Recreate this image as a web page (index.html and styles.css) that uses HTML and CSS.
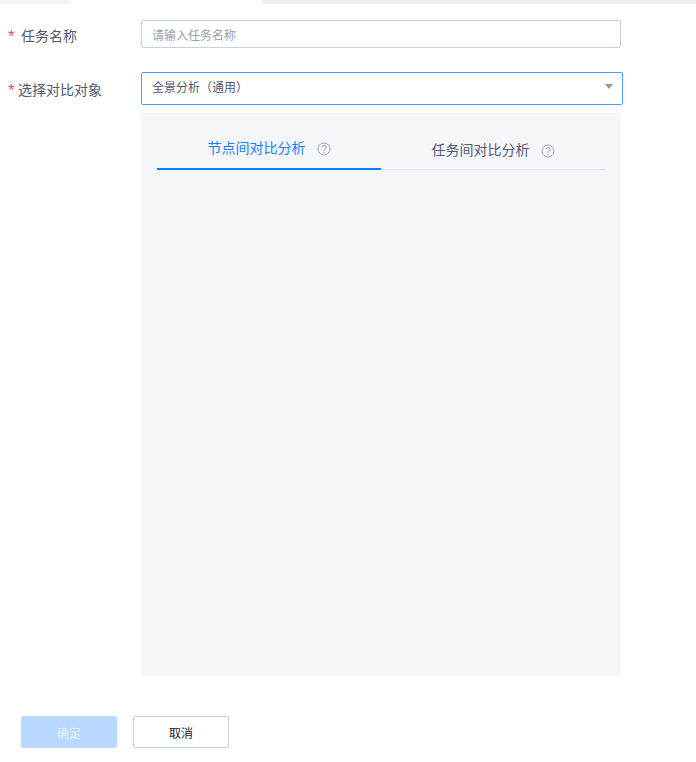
FILE: index.html
```html
<!DOCTYPE html>
<html lang="zh-CN">
<head>
<meta charset="utf-8">
<title>对比分析</title>
<link rel="stylesheet" href="styles.css">
</head>
<body>
<div class="strip">
  <div class="strip-side strip-left"></div>
  <div class="strip-active"></div>
  <div class="strip-side strip-right"></div>
</div>
<form class="form">
  <div class="row row-name">
    <label class="label label-name"><span class="star">*</span>任务名称</label>
    <input class="input" type="text" placeholder="请输入任务名称">
  </div>
  <div class="row row-target">
    <label class="label label-target"><span class="star">*</span>选择对比对象</label>
    <div class="control">
      <div class="select"><span>全景分析（通用）</span><i class="caret"></i></div>
      <div class="panel">
        <div class="tabs">
          <div class="tab tab-active">节点间对比分析
            <svg class="help" viewBox="0 0 14 14"><circle cx="7" cy="7" r="6" fill="none" stroke="#9aa3b5"/><text x="7" y="10.6" text-anchor="middle" class="help-mark">?</text></svg>
          </div>
          <div class="tab">任务间对比分析
            <svg class="help" viewBox="0 0 14 14"><circle cx="7" cy="7" r="6" fill="none" stroke="#9aa3b5"/><text x="7" y="10.6" text-anchor="middle" class="help-mark">?</text></svg>
          </div>
        </div>
      </div>
    </div>
  </div>
  <div class="actions">
    <button class="btn btn-primary" type="button" disabled>确定</button>
    <button class="btn btn-default" type="button">取消</button>
  </div>
</form>
</body>
</html>
```

FILE: styles.css
```css
* { box-sizing: border-box; }
html, body { margin: 0; padding: 0; background: #fff; }
body {
  width: 696px;
  height: 762px;
  overflow: hidden;
  font-family: "Noto Sans CJK SC", "Liberation Sans", sans-serif;
  color: #515a6e;
}
.strip { display: flex; height: 4px; }
.strip-left { width: 69px; background: #f0f2f7; }
.strip-active { width: 193px; background: #fff; }
.strip-right { flex: 1; background: #ebeff6; }
.form { display: flex; flex-direction: column; }
.row { display: flex; }
.row-name { margin-top: 16px; }
.row-target { margin-top: 22px; }
.label {
  width: 141px;
  font-size: 14px;
  line-height: 20px;
  display: flex;
  align-items: center;
  flex: none;
}
.label-name { height: 30px; padding-left: 8px; }
.label-target { height: 34px; padding-left: 8px; }
.star {
  color: #e8505b;
  font: 17px/20px "Liberation Sans", sans-serif;
  width: 13px;
  padding-top: 3px;
}
.label-target .star { width: 10px; }
.input {
  width: 480px;
  height: 28px;
  padding: 0 10px;
  border: 1px solid #c3cfe2;
  border-radius: 2px;
  background: #fff;
  font: 12px/26px "Noto Sans CJK SC", sans-serif;
  outline: none;
}
.input::placeholder { color: #9aa0ab; opacity: 1; }
.control { display: flex; flex-direction: column; }
.select {
  width: 482px;
  height: 33px;
  padding: 0 10px;
  border: 1px solid #4d9fff;
  border-radius: 2px;
  display: flex;
  align-items: center;
  justify-content: space-between;
  font-size: 12px;
  color: #515a6e;
}
.select span { position: relative; top: -2px; }
.caret {
  width: 0;
  height: 0;
  margin: 0 -1px 4px 0;
  border-left: 4px solid transparent;
  border-right: 4px solid transparent;
  border-top: 5px solid #8f97a8;
}
.panel {
  width: 480px;
  height: 563px;
  margin-top: 8px;
  padding: 0 16px;
  background: #f5f6fa;
}
.tabs {
  display: flex;
  height: 57px;
  border-bottom: 1px solid #e1e4ed;
}
.tab {
  width: 224px;
  height: 57px;
  display: flex;
  align-items: center;
  justify-content: center;
  gap: 11px;
  font-size: 14px;
  padding-top: 14px;
  color: #515a6e;
  white-space: nowrap;
}
.tab-active {
  color: #1a7fff;
  border-bottom: 2px solid #0a7cff;
  padding-top: 12px;
}
.help { width: 14px; height: 14px; flex: none; margin-top: 4px; }
.help-mark { font: 10px "Liberation Sans", sans-serif; fill: #9aa3b5; }
.actions {
  display: flex;
  gap: 16px;
  margin-top: 40px;
  padding-left: 21px;
}
.btn {
  width: 96px;
  height: 32px;
  padding: 0;
  border-radius: 2px;
  font: 12px "Noto Sans CJK SC", sans-serif;
}
.btn-primary { background: #b8d8ff; border: 1px solid #b8d8ff; color: #e6f1ff; }
.btn-default { background: #fff; border: 1px solid #c3cfe2; color: #1a1a1a; }
```
